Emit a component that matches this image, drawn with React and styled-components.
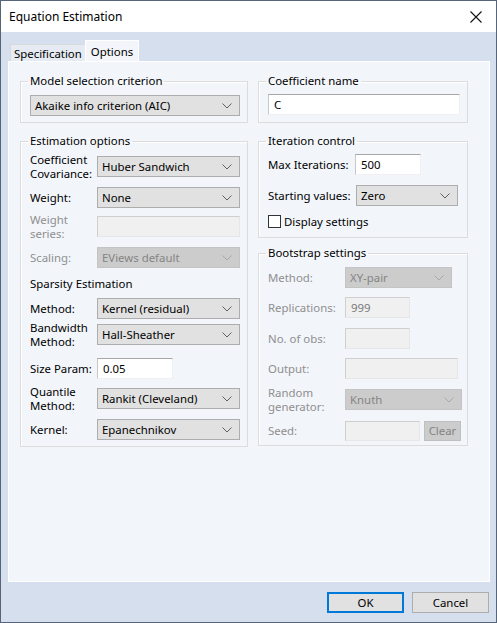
import styled, { createGlobalStyle } from "styled-components";

const GlobalStyle = createGlobalStyle`
html,body{margin:0;padding:0;}
body{font-family:"Noto Sans","Open Sans",sans-serif;font-size:11.4px;color:#000;}
`;

const Window = styled.div`
width:497px;
height:623px;
box-sizing:border-box;
border:1px solid #56657a;
display:flex;
flex-direction:column;
background:#d5dfee;
`;
const TitleBar = styled.div`
height:31px;
background:#fff;
display:flex;
align-items:center;
justify-content:space-between;
padding:0 14px 0 8px;
font-size:12px;
`;
const Body = styled.div`
flex:1;
display:flex;
flex-direction:column;
padding:8px 6px 0 7px;
`;
const TabStrip = styled.div`
display:flex;
align-items:flex-end;
height:21px;
padding-left:2px;
`;
const Tab = styled.div`
height:${p => (p.$active ? "21px" : "17px")};
box-sizing:border-box;
padding:0 ${p => (p.$active ? "5px" : "3px")};
display:flex;
align-items:center;
background:${p => (p.$active ? "#f2f5fa" : "#e6ebf3")};
border:1px solid ${p => (p.$active ? "#fff" : "#d9d9d9")};
border-bottom:none;
margin-right:${p => (p.$active ? "0" : "-1px")};
`;
const Panel = styled.div`
height:521px;
box-sizing:border-box;
background:#f2f5fa;
border:1px solid #fff;
display:flex;
gap:10px;
padding:12px 0 0 11px;
`;
const Column = styled.div`
width:${p => p.$w}px;
display:flex;
flex-direction:column;
`;
const Group = styled.fieldset`
margin:${p => p.$mt || 0}px 0 0 0;
padding:0 ${p => p.$pr ?? 7}px 0 9px;
border:1px solid #dcdcdc;
box-shadow:inset 1px 1px 0 #fff;
height:${p => p.$h}px;
box-sizing:border-box;
min-width:0;
`;
const Legend = styled.legend`
padding:0 2px;
margin-left:-2px;
line-height:14px;
`;
const Row = styled.div`
display:flex;
align-items:center;
height:21px;
margin-top:${p => p.$mt}px;
`;
const Label = styled.div`
width:${p => p.$w}px;
flex:none;
line-height:14px;
color:${p => (p.$off ? "#8f8f8f" : "#000")};
`;
const Heading = styled.div`
margin-top:${p => p.$mt}px;
line-height:14px;
`;
const Combo = styled.div`
width:${p => p.$w}px;
height:21px;
box-sizing:border-box;
flex:none;
display:flex;
align-items:center;
justify-content:space-between;
padding:0 7px 0 4px;
background:${p => (p.$off ? "#cccccc" : "#e1e1e1")};
border:1px solid ${p => (p.$off ? "#c4c4c4" : "#adadad")};
color:${p => (p.$off ? "#858585" : "#000")};
`;
const TextBox = styled.div`
width:${p => p.$w}px;
height:${p => p.$hh || 21}px;
box-sizing:border-box;
flex:none;
display:flex;
align-items:center;
padding-left:5px;
background:${p => (p.$off ? "#f0f0f0" : "#fff")};
border-top:1px solid ${p => (p.$off ? "#cfcfcf" : "#a7a7a7")};
border-left:1px solid ${p => (p.$off ? "#cfcfcf" : "#c8c8c8")};
border-right:1px solid ${p => (p.$off ? "#e6e6e6" : "#f0f0f0")};
border-bottom:1px solid ${p => (p.$off ? "#e6e6e6" : "#f0f0f0")};
color:${p => (p.$off ? "#7a7a7a" : "#000")};
`;
const Check = styled.div`
width:13px;
height:13px;
box-sizing:border-box;
border:1px solid #333;
background:#fff;
margin-right:3px;
`;
const SmallButton = styled.div`
width:37px;
height:20px;
box-sizing:border-box;
margin-left:4px;
display:flex;
align-items:center;
justify-content:center;
background:#cccccc;
border:1px solid #bfbfbf;
color:#838383;
`;
const Footer = styled.div`
display:flex;
justify-content:flex-end;
gap:8px;
padding:10px 1px 0 0;
`;
const Button = styled.div`
width:77px;
height:21px;
box-sizing:border-box;
display:flex;
align-items:center;
justify-content:center;
background:#e1e1e1;
border:${p => (p.$primary ? "2px solid #0078d7" : "1px solid #adadad")};
`;

const Chevron = ({ off }) => (
  <svg width="10" height="6" viewBox="0 0 10 6">
    <path d="M0.5 0.5 L5 5 L9.5 0.5" fill="none" stroke={off ? "#a8a8a8" : "#606060"} strokeWidth="1" />
  </svg>
);

const Select = ({ w, off, children }) => (
  <Combo $w={w} $off={off}>
    <span>{children}</span>
    <Chevron off={off} />
  </Combo>
);

export default function App() {
  return (
    <>
      <GlobalStyle />
      <Window>
        <TitleBar>
          <span>Equation Estimation</span>
          <svg width="12" height="12" viewBox="0 0 12 12">
            <path d="M0.5 0.5 L11.5 11.5 M11.5 0.5 L0.5 11.5" stroke="#111" strokeWidth="1.1" />
          </svg>
        </TitleBar>
        <Body>
          <TabStrip>
            <Tab>Specification</Tab>
            <Tab $active>Options</Tab>
          </TabStrip>
          <Panel>
            <Column $w={228}>
              <Group $h={49}>
                <Legend>Model selection criterion</Legend>
                <Row $mt={7}>
                  <Select w={210}>Akaike info criterion (AIC)</Select>
                </Row>
              </Group>
              <Group $mt={11} $h={313}>
                <Legend>Estimation options</Legend>
                <Row $mt={8}>
                  <Label $w={67}>Coefficient<br />Covariance:</Label>
                  <Select w={143}>Huber Sandwich</Select>
                </Row>
                <Row $mt={10}>
                  <Label $w={67}>Weight:</Label>
                  <Select w={143}>None</Select>
                </Row>
                <Row $mt={8}>
                  <Label $w={67} $off>Weight<br />series:</Label>
                  <TextBox $w={143} $off />
                </Row>
                <Row $mt={10}>
                  <Label $w={67} $off>Scaling:</Label>
                  <Select w={143} off>EViews default</Select>
                </Row>
                <Heading $mt={9}>Sparsity Estimation</Heading>
                <Row $mt={7}>
                  <Label $w={67}>Method:</Label>
                  <Select w={143}>Kernel (residual)</Select>
                </Row>
                <Row $mt={5}>
                  <Label $w={67}>Bandwidth<br />Method:</Label>
                  <Select w={143}>Hall-Sheather</Select>
                </Row>
                <Row $mt={13}>
                  <Label $w={67}>Size Param:</Label>
                  <TextBox $w={76}>0.05</TextBox>
                </Row>
                <Row $mt={9}>
                  <Label $w={67}>Quantile<br />Method:</Label>
                  <Select w={143}>Rankit (Cleveland)</Select>
                </Row>
                <Row $mt={10}>
                  <Label $w={67}>Kernel:</Label>
                  <Select w={143}>Epanechnikov</Select>
                </Row>
              </Group>
            </Column>
            <Column $w={210}>
              <Group $h={49} $pr={9}>
                <Legend>Coefficient name</Legend>
                <Row $mt={6}>
                  <TextBox $w={192}>C</TextBox>
                </Row>
              </Group>
              <Group $mt={11} $h={104} $pr={9}>
                <Legend>Iteration control</Legend>
                <Row $mt={6}>
                  <Label $w={87}>Max Iterations:</Label>
                  <TextBox $w={66}>500</TextBox>
                </Row>
                <Row $mt={10}>
                  <Label $w={88}>Starting values:</Label>
                  <Select w={102}>Zero</Select>
                </Row>
                <Row $mt={5}>
                  <Check />
                  <span>Display settings</span>
                </Row>
              </Group>
              <Group $mt={8} $h={200} $pr={5}>
                <Legend>Bootstrap settings</Legend>
                <Row $mt={7}>
                  <Label $w={77} $off>Method:</Label>
                  <Select w={107} off>XY-pair</Select>
                </Row>
                <Row $mt={9}>
                  <Label $w={77} $off>Replications:</Label>
                  <TextBox $w={65} $off>999</TextBox>
                </Row>
                <Row $mt={10}>
                  <Label $w={77} $off>No. of obs:</Label>
                  <TextBox $w={65} $off />
                </Row>
                <Row $mt={9}>
                  <Label $w={77} $off>Output:</Label>
                  <TextBox $w={113} $off />
                </Row>
                <Row $mt={10}>
                  <Label $w={77} $off>Random<br />generator:</Label>
                  <Select w={117} off>Knuth</Select>
                </Row>
                <Row $mt={10}>
                  <Label $w={77} $off>Seed:</Label>
                  <TextBox $w={75} $hh={20} $off />
                  <SmallButton>Clear</SmallButton>
                </Row>
              </Group>
            </Column>
          </Panel>
          <Footer>
            <Button $primary>OK</Button>
            <Button>Cancel</Button>
          </Footer>
        </Body>
      </Window>
    </>
  );
}
